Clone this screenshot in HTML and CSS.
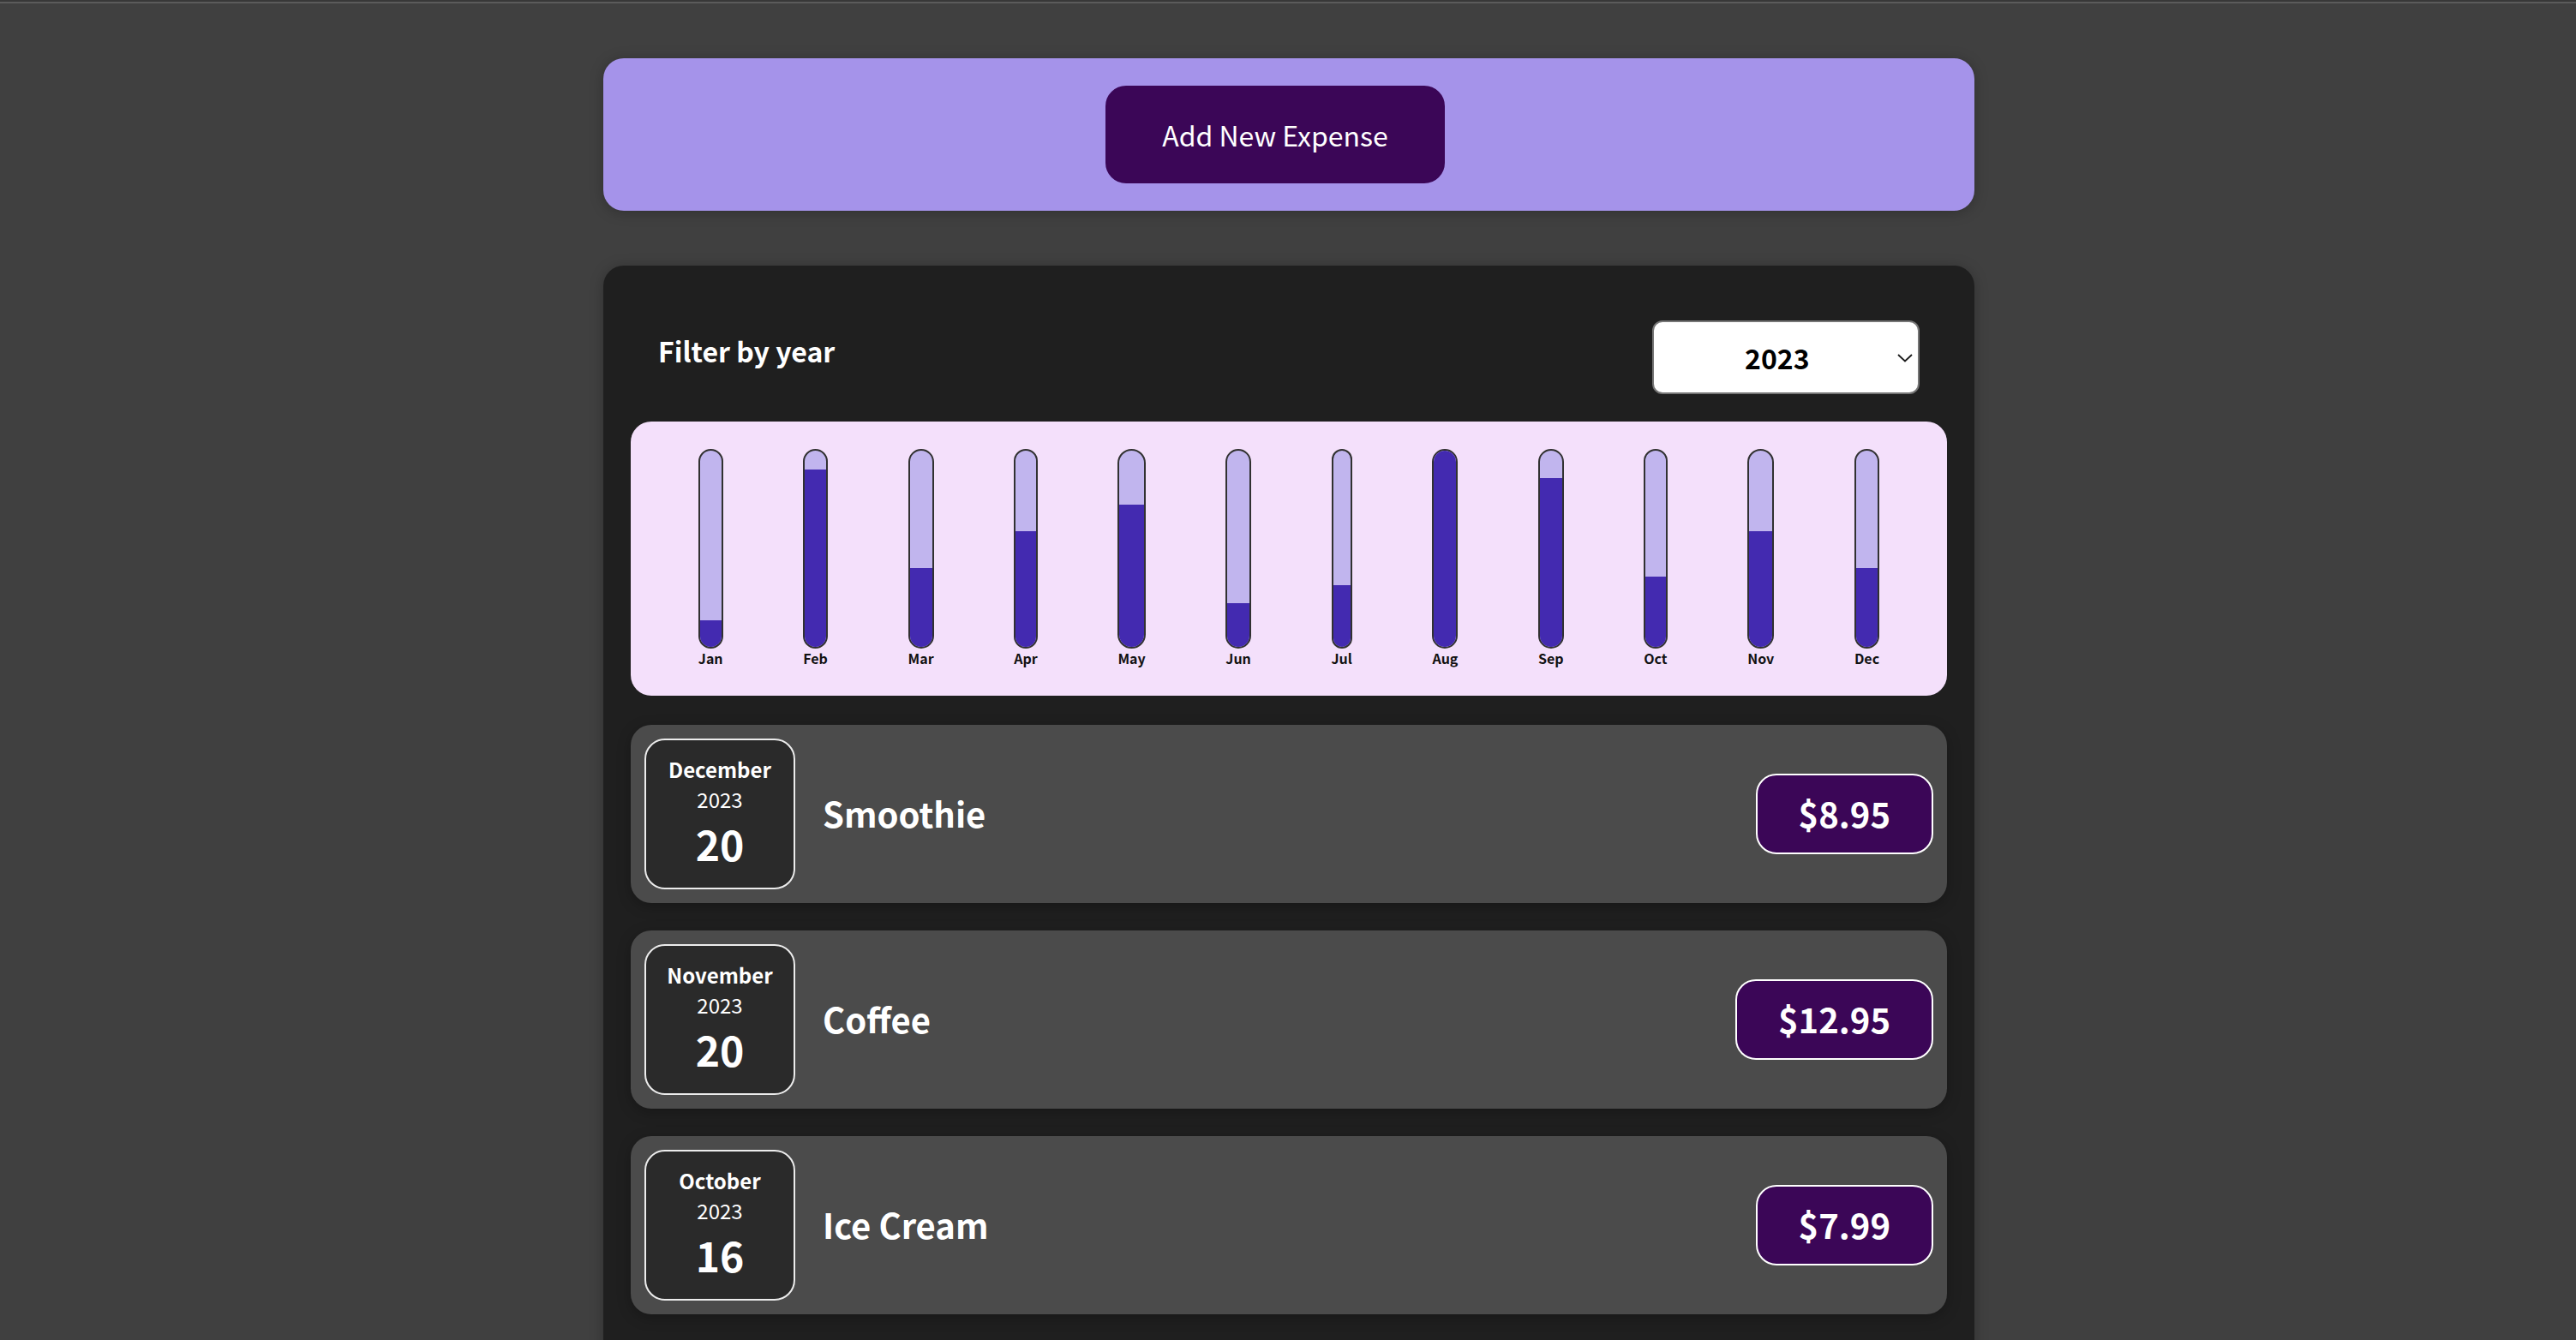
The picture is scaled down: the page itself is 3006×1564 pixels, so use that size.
FILE: index.html
```html
<!DOCTYPE html>
<html lang="en">
<head>
<meta charset="utf-8">
<title>Expenses</title>
<link rel="stylesheet" href="styles.css">
</head>
<body>
<div class="topline"></div>
<div class="new-expense">
  <button class="new-expense__btn" type="button">Add New Expense</button>
</div>
<div class="expenses card">
  <div class="expenses-filter">
    <div class="expenses-filter__control">
      <label class="expenses-filter__label">Filter by year</label>
      <div class="select-wrap">
        <select class="year-select">
          <option>2023</option>
          <option>2022</option>
          <option>2021</option>
          <option>2020</option>
        </select>
        <svg class="select-chevron" width="18" height="10" viewBox="0 0 18 10"><polyline points="1,1 9,8.5 17,1" fill="none" stroke="#1a1a1a" stroke-width="1.8"/></svg>
      </div>
    </div>
  </div>
  <div class="chart">
    <div class="chart-bar"><div class="chart-bar__inner"><div class="chart-bar__fill" style="height:13.7%"></div></div><div class="chart-bar__label">Jan</div></div>
    <div class="chart-bar"><div class="chart-bar__inner"><div class="chart-bar__fill" style="height:90.7%"></div></div><div class="chart-bar__label">Feb</div></div>
    <div class="chart-bar"><div class="chart-bar__inner"><div class="chart-bar__fill" style="height:40.5%"></div></div><div class="chart-bar__label">Mar</div></div>
    <div class="chart-bar"><div class="chart-bar__inner"><div class="chart-bar__fill" style="height:59%"></div></div><div class="chart-bar__label">Apr</div></div>
    <div class="chart-bar"><div class="chart-bar__inner"><div class="chart-bar__fill" style="height:72.7%"></div></div><div class="chart-bar__label">May</div></div>
    <div class="chart-bar"><div class="chart-bar__inner"><div class="chart-bar__fill" style="height:22.5%"></div></div><div class="chart-bar__label">Jun</div></div>
    <div class="chart-bar"><div class="chart-bar__inner"><div class="chart-bar__fill" style="height:31.7%"></div></div><div class="chart-bar__label">Jul</div></div>
    <div class="chart-bar"><div class="chart-bar__inner"><div class="chart-bar__fill" style="height:100%"></div></div><div class="chart-bar__label">Aug</div></div>
    <div class="chart-bar"><div class="chart-bar__inner"><div class="chart-bar__fill" style="height:86%"></div></div><div class="chart-bar__label">Sep</div></div>
    <div class="chart-bar"><div class="chart-bar__inner"><div class="chart-bar__fill" style="height:35.7%"></div></div><div class="chart-bar__label">Oct</div></div>
    <div class="chart-bar"><div class="chart-bar__inner"><div class="chart-bar__fill" style="height:59%"></div></div><div class="chart-bar__label">Nov</div></div>
    <div class="chart-bar"><div class="chart-bar__inner"><div class="chart-bar__fill" style="height:40.5%"></div></div><div class="chart-bar__label">Dec</div></div>
  </div>
  <ul class="expenses-list">
    <li class="expense-item">
      <div class="expense-date">
        <div class="expense-date__month">December</div>
        <div class="expense-date__year">2023</div>
        <div class="expense-date__day">20</div>
      </div>
      <div class="expense-item__description">
        <h2 class="expense-item__title">Smoothie</h2>
        <div class="expense-item__price">$8.95</div>
      </div>
    </li>
    <li class="expense-item">
      <div class="expense-date">
        <div class="expense-date__month">November</div>
        <div class="expense-date__year">2023</div>
        <div class="expense-date__day">20</div>
      </div>
      <div class="expense-item__description">
        <h2 class="expense-item__title">Coffee</h2>
        <div class="expense-item__price">$12.95</div>
      </div>
    </li>
    <li class="expense-item">
      <div class="expense-date">
        <div class="expense-date__month">October</div>
        <div class="expense-date__year">2023</div>
        <div class="expense-date__day">16</div>
      </div>
      <div class="expense-item__description">
        <h2 class="expense-item__title">Ice Cream</h2>
        <div class="expense-item__price">$7.99</div>
      </div>
    </li>
  </ul>
</div>
</body>
</html>
```

FILE: styles.css
```css
* {
  box-sizing: border-box;
}

html {
  font-family: "Noto Sans CJK JP", "Noto Sans", sans-serif;
}

body {
  margin: 0;
  background-color: #404040;
  padding-top: 2px;
  padding-left: 2px;
  background-image: linear-gradient(#383838, #383838);
  background-repeat: no-repeat;
  background-size: 100% 2px;
}

.topline {
  height: 2px;
  margin-left: -2px;
  background-color: #5b5b5b;
}

.new-expense {
  background-color: #a593ea;
  padding: 32px;
  margin: 64px auto;
  width: 1600px;
  border-radius: 24px;
  text-align: center;
  box-shadow: 0 2px 16px rgba(0, 0, 0, 0.25);
}

.new-expense__btn {
  font: inherit;
  font-size: 32px;
  line-height: 1.448;
  cursor: pointer;
  padding: 32px 64px;
  border: 2px solid #3b0657;
  background-color: #3b0657;
  color: #ffffff;
  border-radius: 24px;
  margin-right: 32px;
}

.card {
  border-radius: 24px;
  box-shadow: 0 2px 16px rgba(0, 0, 0, 0.25);
}

.expenses {
  padding: 32px;
  background-color: #1f1f1f;
  margin: 64px auto;
  width: 1600px;
}

.expenses-filter {
  color: #ffffff;
  padding: 0 32px;
}

.expenses-filter__control {
  display: flex;
  width: 100%;
  align-items: center;
  justify-content: space-between;
  margin: 32px 0;
}

.expenses-filter__label {
  font-weight: bold;
  font-size: 32px;
  line-height: 1.448;
  margin-bottom: 16px;
}

.select-wrap {
  position: relative;
  width: 312px;
  height: 86px;
}

.year-select {
  -webkit-appearance: none;
  appearance: none;
  font: inherit;
  font-size: 32px;
  font-weight: bold;
  color: #000000;
  width: 312px;
  height: 86px;
  padding: 0 40px 0 106px;
  border: 2px solid #767676;
  border-radius: 12px;
  background-color: #ffffff;
  outline: none;
}

.select-chevron {
  position: absolute;
  left: 286px;
  top: 39px;
  pointer-events: none;
}

.chart {
  padding: 32px;
  border-radius: 24px;
  background-color: #f4e0fb;
  text-align: center;
  display: flex;
  justify-content: space-around;
  height: 320px;
}

.chart-bar {
  height: 100%;
  display: flex;
  flex-direction: column;
  align-items: center;
}

.chart-bar__inner {
  height: 100%;
  width: 100%;
  border: 2px solid #313131;
  border-radius: 24px;
  background-color: #c1b5ee;
  overflow: hidden;
  display: flex;
  flex-direction: column;
  justify-content: flex-end;
}

.chart-bar__fill {
  background-color: #432ab0;
  width: 100%;
}

.chart-bar__label {
  font-weight: bold;
  font-size: 16px;
  line-height: 1.448;
  text-align: center;
  color: #111111;
}

.expenses-list {
  list-style: none;
  margin: 0;
  padding: 2px 0 0;
}

.expense-item {
  display: flex;
  justify-content: space-between;
  align-items: center;
  box-shadow: 0 4px 16px rgba(0, 0, 0, 0.25);
  padding: 16px;
  margin: 32px 0;
  border-radius: 24px;
  background-color: #4b4b4b;
}

.expense-item__description {
  display: flex;
  flex-direction: row;
  align-items: center;
  justify-content: flex-start;
  flex: 1;
}

.expense-item__title {
  font-size: 40px;
  line-height: 1.448;
  font-weight: bold;
  flex: 1;
  margin: 0 32px;
  color: #ffffff;
}

.expense-item__price {
  font-size: 40px;
  line-height: 1.448;
  font-weight: bold;
  color: #ffffff;
  background-color: #3b0657;
  border: 2px solid #ffffff;
  padding: 16px 48px;
  border-radius: 24px;
}

.expense-date {
  display: flex;
  flex-direction: column;
  width: 176px;
  height: 176px;
  border: 2px solid #ececec;
  background-color: #2a2a2a;
  color: #ffffff;
  border-radius: 24px;
  align-items: center;
  justify-content: center;
}

.expense-date__month {
  font-size: 24px;
  line-height: 1.448;
  font-weight: bold;
}

.expense-date__year {
  font-size: 24px;
  line-height: 1.448;
}

.expense-date__day {
  font-size: 48px;
  line-height: 1.448;
  font-weight: bold;
}
```
